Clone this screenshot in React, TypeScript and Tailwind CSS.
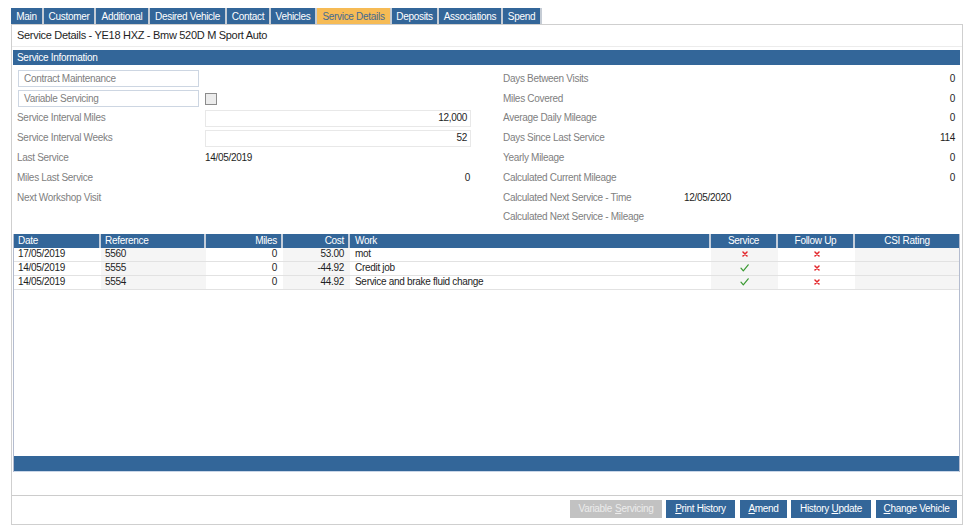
import React from "react";

const tabs: { label: string; w: string; active?: boolean }[] = [
  { label: "Main", w: "w-[33px]" },
  { label: "Customer", w: "w-[52px]" },
  { label: "Additional", w: "w-[54px]" },
  { label: "Desired Vehicle", w: "w-[77px]" },
  { label: "Contact", w: "w-[44px]" },
  { label: "Vehicles", w: "w-[46px]" },
  { label: "Service Details", w: "w-[75px]", active: true },
  { label: "Deposits", w: "w-[47px]" },
  { label: "Associations", w: "w-[64px]" },
  { label: "Spend", w: "w-[39px]" },
];

function Cross() {
  return (
    <svg width="6" height="6" viewBox="0 0 6 6">
      <path d="M1 1 L5 5 M5 1 L1 5" stroke="#e3262b" strokeWidth="1.5" strokeLinecap="round" />
    </svg>
  );
}

function Check() {
  return (
    <svg width="9" height="8" viewBox="0 0 9 8">
      <path d="M1 4.2 L3.3 6.8 L8.2 0.8" stroke="#3a9a32" strokeWidth="1.2" fill="none" strokeLinecap="round" strokeLinejoin="round" />
    </svg>
  );
}

const rows = [
  { date: "17/05/2019", ref: "5560", miles: "0", cost: "53.00", work: "mot", service: false, follow: false },
  { date: "14/05/2019", ref: "5555", miles: "0", cost: "-44.92", work: "Credit job", service: true, follow: false },
  { date: "14/05/2019", ref: "5554", miles: "0", cost: "44.92", work: "Service and brake fluid change", service: true, follow: false },
];

function LeftRow({ children }: { children: React.ReactNode }) {
  return <div className="h-[19.8px] flex items-center">{children}</div>;
}

export default function App() {
  return (
    <div className="w-[966px] h-[529px] bg-white font-['Liberation_Sans',Arial,sans-serif] tracking-[-0.3px] text-[10px] leading-none overflow-hidden">
      <div className="pt-[8px] pl-[11px]">
        {/* Tabs */}
        <div className="flex h-[16px]">
          {tabs.map((t) => (
            <div
              key={t.label}
              className={`${t.w} h-[16px] flex items-center justify-center pt-[1px] border-r-2 border-[#c5ccd5] ${
                t.active ? "bg-[#f6bb55] text-[#456a92]" : "bg-[#336699] text-white"
              }`}
            >
              {t.label}
            </div>
          ))}
        </div>

        {/* Panel */}
        <div className="w-[952px] h-[501px] border border-[#cfcfcf] flex flex-col">
          <div className="h-[22px] flex items-center pl-[5px] border-b border-[#ececec] text-[11px] text-[#1e1e1e]">
            Service Details - YE18 HXZ - Bmw 520D M Sport Auto
          </div>
          <div className="mt-[3px] ml-[1px] w-[947px] h-[15px] bg-[#336699] text-white flex items-center pl-[4px]">
            Service Information
          </div>

          {/* Form */}
          <div className="flex pt-[4px]">
            <div className="ml-[5px] w-[454px] flex flex-col text-[#808080]">
              <LeftRow>
                <div className="ml-[1px] w-[181px] h-[17px] border border-[#cdd6e2] flex items-center pl-[5px]">
                  Contract Maintenance
                </div>
              </LeftRow>
              <LeftRow>
                <div className="ml-[1px] w-[181px] h-[17px] border border-[#cdd6e2] flex items-center pl-[5px]">
                  Variable Servicing
                </div>
                <div className="ml-[6px] w-[12px] h-[12px] border border-[#8c8c8c] bg-[#ececec]" />
              </LeftRow>
              <LeftRow>
                <div className="w-[188px]">Service Interval Miles</div>
                <div className="w-[266px] h-[17px] border border-[#e8e8e8] flex items-center justify-end pr-[3px] text-[#1e1e1e]">
                  12,000
                </div>
              </LeftRow>
              <LeftRow>
                <div className="w-[188px]">Service Interval Weeks</div>
                <div className="w-[266px] h-[17px] border border-[#e8e8e8] flex items-center justify-end pr-[3px] text-[#1e1e1e]">
                  52
                </div>
              </LeftRow>
              <LeftRow>
                <div className="w-[188px]">Last Service</div>
                <div className="text-[#1e1e1e]">14/05/2019</div>
              </LeftRow>
              <LeftRow>
                <div className="w-[188px]">Miles Last Service</div>
                <div className="w-[266px] text-right pr-[1px] text-[#1e1e1e]">0</div>
              </LeftRow>
              <LeftRow>
                <div className="w-[188px]">Next Workshop Visit</div>
              </LeftRow>
              <LeftRow>
                <div />
              </LeftRow>
            </div>

            <div className="ml-[32px] w-[452px] flex flex-col text-[#808080]">
              {[
                ["Days Between Visits", "0"],
                ["Miles Covered", "0"],
                ["Average Daily Mileage", "0"],
                ["Days Since Last Service", "114"],
                ["Yearly Mileage", "0"],
                ["Calculated Current Mileage", "0"],
              ].map(([l, v]) => (
                <LeftRow key={l}>
                  <div className="flex-1">{l}</div>
                  <div className="text-[#1e1e1e]">{v}</div>
                </LeftRow>
              ))}
              <LeftRow>
                <div className="w-[181px]">Calculated Next Service - Time</div>
                <div className="text-[#1e1e1e]">12/05/2020</div>
              </LeftRow>
              <LeftRow>
                <div>Calculated Next Service - Mileage</div>
              </LeftRow>
            </div>
          </div>

          {/* Table */}
          <div className="mt-[6.6px] ml-[1px] w-[947px] h-[238px] flex flex-col border-l border-r border-[#b4bccf]">
            <div className="h-[14px] flex bg-[#336699] text-white">
              <div className="w-[87px] border-r-2 border-[#c4cedb] pl-[4px] flex items-center">Date</div>
              <div className="w-[105px] border-r-2 border-[#c4cedb] pl-[4px] flex items-center">Reference</div>
              <div className="w-[77px] border-r-2 border-[#c4cedb] pr-[4px] flex items-center justify-end">Miles</div>
              <div className="w-[67px] border-r-2 border-[#c4cedb] pr-[4px] flex items-center justify-end">Cost</div>
              <div className="w-[361px] border-r-2 border-[#c4cedb] pl-[5px] flex items-center">Work</div>
              <div className="w-[67px] border-r-2 border-[#c4cedb] flex items-center justify-center">Service</div>
              <div className="w-[77px] border-r-2 border-[#c4cedb] flex items-center justify-center">Follow Up</div>
              <div className="w-[104px] flex items-center justify-center">CSI Rating</div>
            </div>
            {rows.map((r, i) => (
              <div key={i} className="h-[14px] flex border-b border-[#e2e2e2] text-[#1e1e1e]">
                <div className="w-[87px] pl-[4px] flex items-center">{r.date}</div>
                <div className="w-[105px] pl-[4px] flex items-center bg-[#f5f5f5]">{r.ref}</div>
                <div className="w-[77px] pr-[6px] flex items-center justify-end">{r.miles}</div>
                <div className="w-[67px] pr-[6px] flex items-center justify-end bg-[#f5f5f5]">{r.cost}</div>
                <div className="w-[361px] pl-[5px] flex items-center">{r.work}</div>
                <div className="w-[67px] flex items-center justify-center bg-[#f5f5f5]">
                  {r.service ? <Check /> : <Cross />}
                </div>
                <div className="w-[77px] flex items-center justify-center">
                  {r.follow ? <Check /> : <Cross />}
                </div>
                <div className="w-[104px] bg-[#f5f5f5]" />
              </div>
            ))}
            <div className="flex-1" />
            <div className="h-[15px] bg-[#336699]" />
            <div className="h-[1px] bg-[#c9d6e8]" />
          </div>

          <div className="h-[23px]" />
          <div className="h-[1px] bg-[#cccccc]" />

          {/* Buttons */}
          <div className="flex justify-end pr-[5px] pt-[4px] text-white">
            <div className="w-[92px] h-[18px] bg-[#c2c2c2] text-[#ececec] flex items-center justify-center pt-[1px]">
              Variable <u className="ml-[3px]">S</u>ervicing
            </div>
            <div className="ml-[4px] w-[69px] h-[18px] bg-[#336699] flex items-center justify-center pt-[1px]">
              <u>P</u>rint History
            </div>
            <div className="ml-[5px] w-[47px] h-[18px] bg-[#336699] flex items-center justify-center pt-[1px]">
              <u>A</u>mend
            </div>
            <div className="ml-[4px] w-[80px] h-[18px] bg-[#336699] flex items-center justify-center pt-[1px]">
              History&nbsp;<u>U</u>pdate
            </div>
            <div className="ml-[5px] w-[81px] h-[18px] bg-[#336699] flex items-center justify-center pt-[1px]">
              <u>C</u>hange Vehicle
            </div>
          </div>
        </div>
      </div>
    </div>
  );
}
